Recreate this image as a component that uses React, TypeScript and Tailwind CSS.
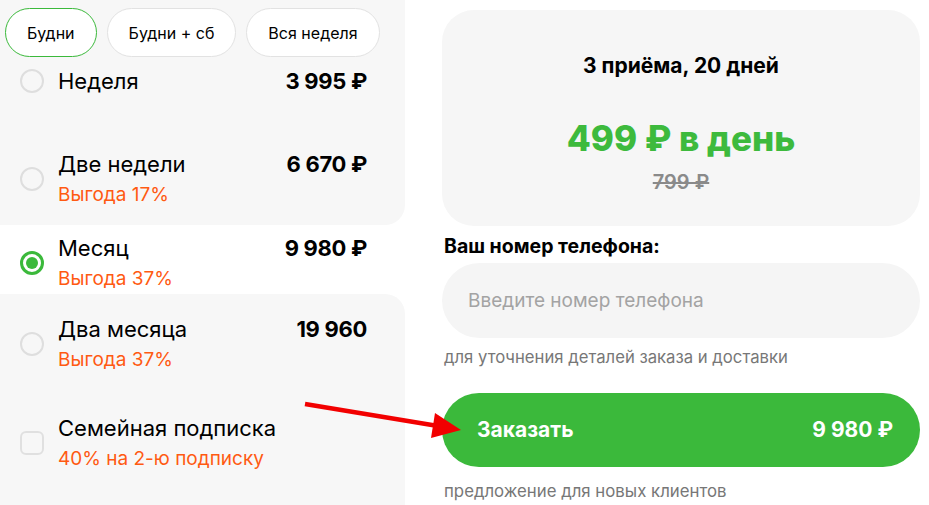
import { useState } from 'react';

const font = { fontFamily: 'Inter, "Noto Sans", sans-serif' };

type Plan = {
  title: string;
  price?: string;
  note?: string;
};

function Radio({ checked }: { checked?: boolean }) {
  if (checked) {
    return (
      <span className="flex h-[24px] w-[24px] shrink-0 items-center justify-center rounded-full border-[3px] border-[#3bb93b] bg-white">
        <span className="h-[12px] w-[12px] rounded-full bg-[#3bb93b]" />
      </span>
    );
  }
  return <span className="h-[24px] w-[24px] shrink-0 rounded-full border-2 border-[#dedede] bg-[#f7f7f7]" />;
}

function PlanRow({ plan, checked, box }: { plan: Plan; checked?: boolean; box?: boolean }) {
  return (
    <div className="flex items-center pl-[20px] pr-[38px]">
      {box ? (
        <span className="h-[24px] w-[24px] shrink-0 rounded-[6px] border-2 border-[#e0e0e0] bg-[#f7f7f7]" />
      ) : (
        <Radio checked={checked} />
      )}
      <div className="ml-[14px] flex-1">
        <div className="flex h-[28px] items-center justify-between">
          <span className="text-[22px] text-black">{plan.title}</span>
          {plan.price && <span className="text-[22px] font-bold tracking-[-0.3px] text-black">{plan.price}</span>}
        </div>
        {plan.note && (
          <div className="mt-[5px] h-[24px] text-[19px] leading-[24px] text-[#ff5a12]">{plan.note}</div>
        )}
      </div>
    </div>
  );
}

export default function App() {
  const [tab, setTab] = useState('Будни');
  const tabs = ['Будни', 'Будни + сб', 'Вся неделя'];

  return (
    <div className="relative flex h-[505px] w-[929px] overflow-hidden bg-white" style={font}>
      {/* Left: plans */}
      <div className="flex w-[405px] shrink-0 flex-col">
        <div className="h-[225px] rounded-br-[20px] bg-[#f7f7f7]">
          <div className="flex gap-[10px] pl-[5px] pt-[8px]">
            {tabs.map((t) => (
              <button
                key={t}
                onClick={() => setTab(t)}
                className={`h-[49px] rounded-full bg-white px-[21px] text-[16px] text-black ${
                  tab === t ? 'border border-[#3bb93b]' : 'border border-[#e2e2e2]'
                }`}
              >
                {t}
              </button>
            ))}
          </div>
          <div className="mt-[10px]">
            <PlanRow plan={{ title: 'Неделя', price: '3 995 ₽' }} />
          </div>
          <div className="mt-[55px]">
            <PlanRow plan={{ title: 'Две недели', price: '6 670 ₽', note: 'Выгода 17%' }} />
          </div>
        </div>

        <div className="h-[69px] pt-[9px]">
          <PlanRow checked plan={{ title: 'Месяц', price: '9 980 ₽', note: 'Выгода 37%' }} />
        </div>

        <div className="flex-1 rounded-tr-[20px] bg-[#f7f7f7] pt-[21px]">
          <PlanRow plan={{ title: 'Два месяца', price: '19 960', note: 'Выгода 37%' }} />
          <div className="mt-[42px]">
            <PlanRow box plan={{ title: 'Семейная подписка', note: '40% на 2-ю подписку' }} />
          </div>
        </div>
      </div>

      {/* Right: summary and order */}
      <div className="ml-[37px] flex w-[478px] flex-col pt-[10px]">
        <div className="flex h-[216px] flex-col items-center rounded-[32px] bg-[#f6f6f6] pt-[42px]">
          <div className="text-[21px] font-bold leading-[28px] text-black">3 приёма, 20 дней</div>
          <div className="mt-[36px] text-[35px] font-extrabold leading-[44px] text-[#3dba3d]">499 ₽ в день</div>
          <div className="mt-[9px] text-[20px] font-semibold leading-[26px] text-[#8a8a8a] line-through">799 ₽</div>
        </div>

        <div className="mt-[8px] pl-[2px] text-[19.5px] font-bold leading-[24px] text-black">Ваш номер телефона:</div>
        <input
          className="mt-[5px] h-[75px] w-full rounded-full bg-[#f5f5f5] px-[26px] text-[19px] text-black outline-none placeholder:text-[#a3a3a3]"
          placeholder="Введите номер телефона"
        />
        <div className="mt-[8px] pl-[2px] text-[16.7px] leading-[22px] text-[#777]">
          для уточнения деталей заказа и доставки
        </div>

        <button className="mt-[25px] flex h-[74px] w-full items-center justify-between rounded-full bg-[#3bb93b] pl-[35px] pr-[27px] text-[21px] font-bold text-white">
          <span>Заказать</span>
          <span>9 980 ₽</span>
        </button>
        <div className="mt-[13px] pl-[2px] text-[16.8px] leading-[22px] text-[#777]">предложение для новых клиентов</div>
      </div>

      {/* Red pointer arrow */}
      <svg className="pointer-events-none absolute left-0 top-0" width="929" height="505" viewBox="0 0 929 505">
        <line x1="305" y1="404" x2="438" y2="426" stroke="#f20000" strokeWidth="4.5" />
        <polygon points="461,430 435,413 431,438" fill="#f20000" />
      </svg>
    </div>
  );
}
